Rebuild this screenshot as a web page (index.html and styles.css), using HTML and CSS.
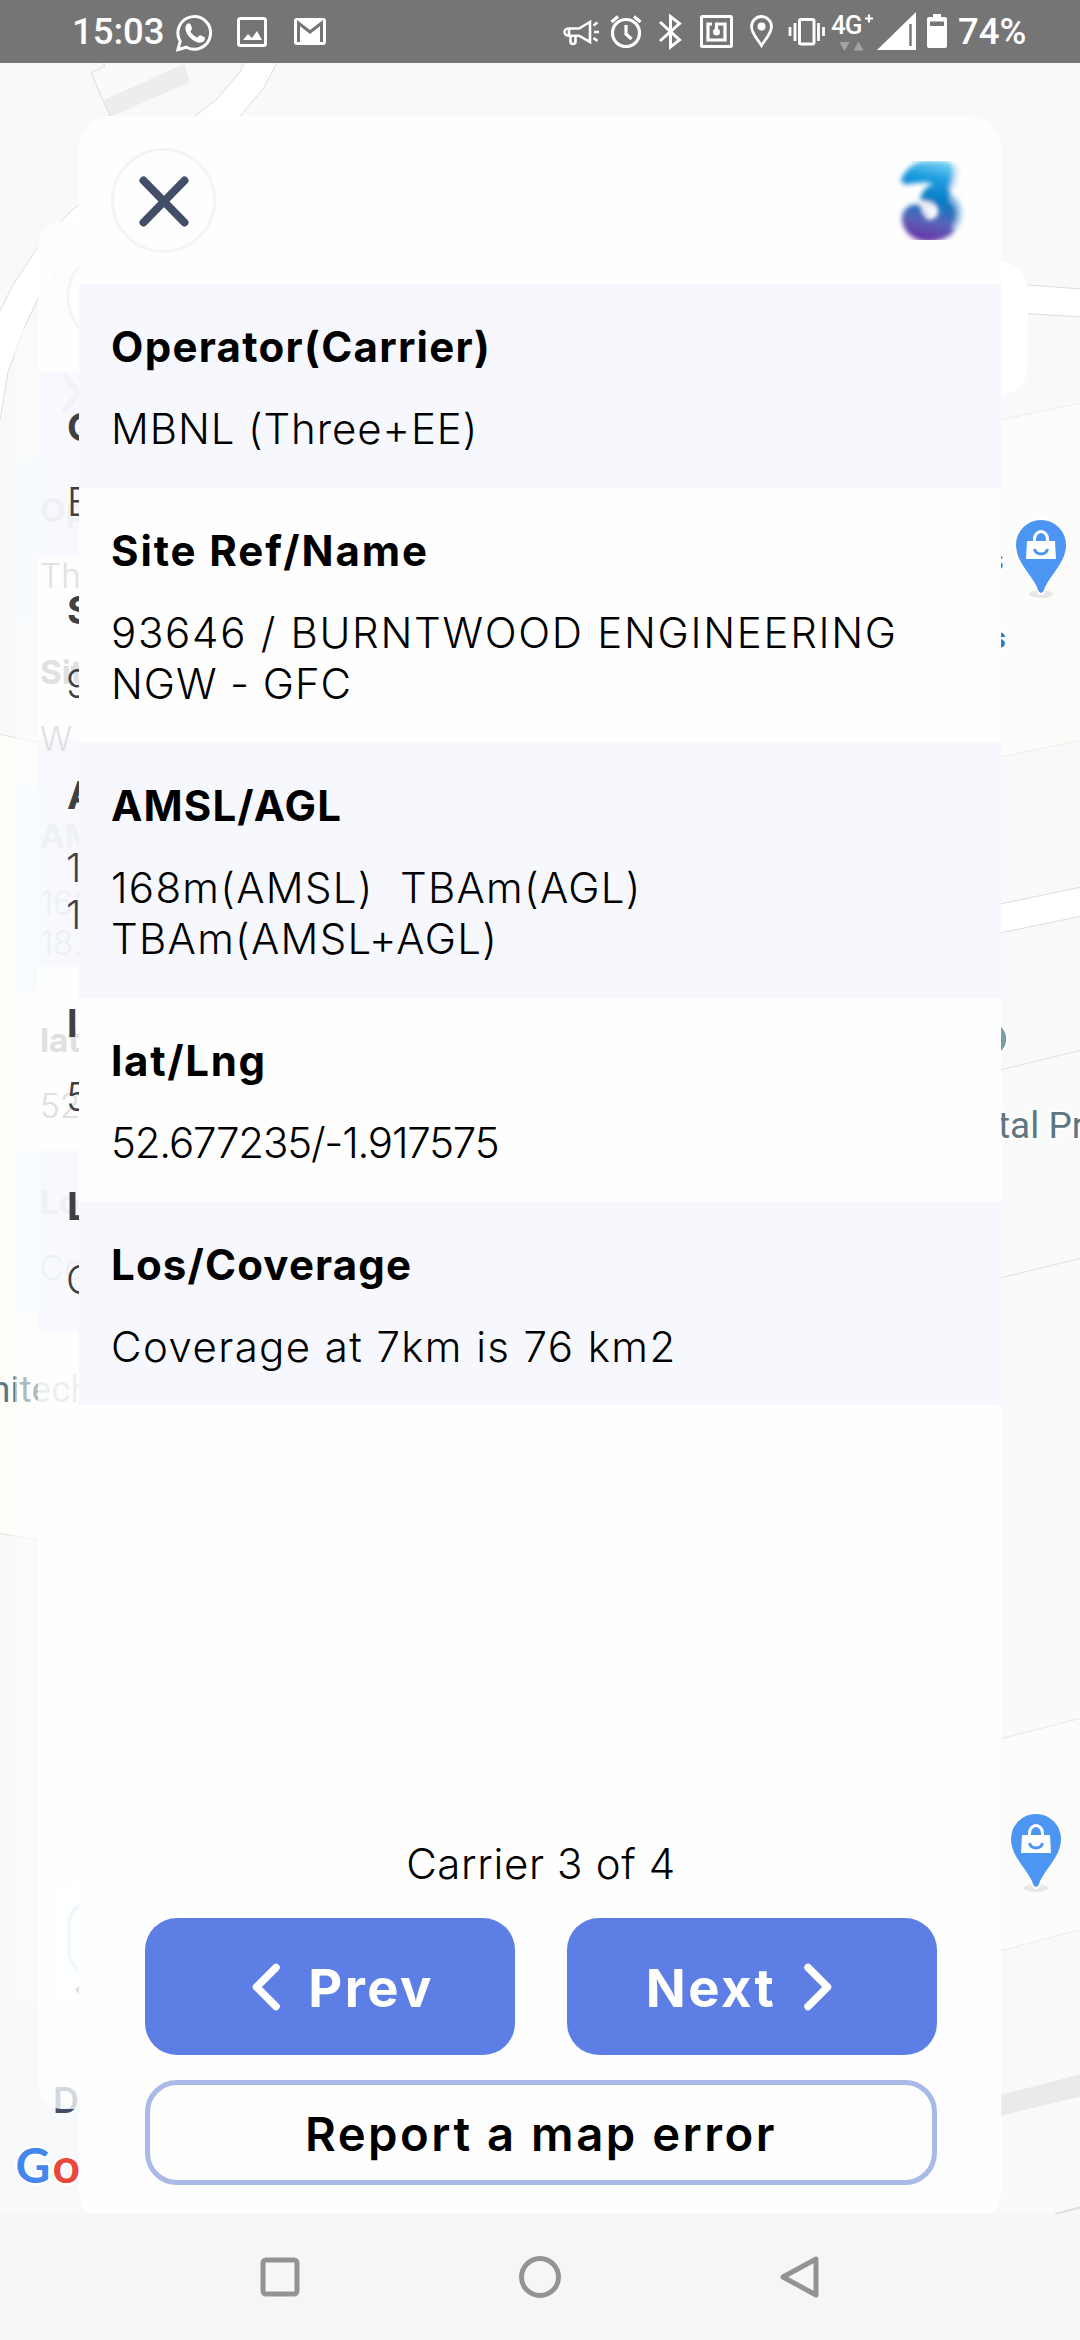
FILE: index.html
```html
<!DOCTYPE html>
<html lang="en">
<head>
<meta charset="utf-8">
<title>Carrier details</title>
<link rel="stylesheet" href="styles.css">
</head>
<body>
<div class="phone">
  <header class="status">
    <span class="clock">15:03</span>
    <svg class="status-left" width="152" height="63" viewBox="175 0 152 63" fill="none" stroke="#fff">
      <path d="M178 49.500l2.200-8.300a16.300 16.300 0 1 1 6.200 6z" stroke-width="3"/>
      <path d="M187 24c2-1.500 3.500-.5 4 1.500l1 2.500c.5 1.500-1.500 2.500-1.500 3.500 1.500 3 3.500 4.500 6.500 6 1.500-.5 2.500-3 4-2l3.500 1.800c1.500 1 0 4-2 4.800-5 2-10-1.500-13-5s-6-9-2.500-13.100z" fill="#fff" stroke="none"/>
      <rect x="238.500" y="18.500" width="27" height="27" rx="2" stroke-width="3"/>
      <path d="M243 40l5-6 4 4 5-7 5 9z" fill="#fff" stroke="none"/>
      <rect x="294" y="18" width="32" height="27" rx="3" fill="#fff" stroke="none"/>
      <path d="M298.500 42V23l11.500 9 11.500-9v19" stroke="#757575" stroke-width="3"/>
    </svg>
    <svg class="status-right" width="388" height="63" viewBox="562 0 388 63" fill="none" stroke="#fff">
      <g stroke-width="2.600"><path d="M590 22l-11 6.500h-10a4.500 3.600 0 0 0 0 7.200h10L590 42zM570.500 36v5.500a2 2 0 0 0 5 0V36M569 29v6M593.500 25.500l4-3M594 32h5M593.500 38l4 3"/></g>
      <circle cx="626" cy="33" r="13.500" stroke-width="3.200"/>
      <path d="M611.500 22l6.500-5.500M640.500 22l-6.500-5.500M626 25v9l5.500 5" stroke-width="3.200"/>
      <path d="M660 22l19.500 18-9 7V16.500l9 7L660 41" stroke-width="3"/>
      <rect x="701.500" y="16.500" width="30" height="30" rx="1" stroke-width="3"/>
      <path d="M712 24h-4v16h17V24h-8.500v7" stroke-width="3.200"/><circle cx="716.500" cy="32" r="3.500" fill="#fff" stroke="none"/>
      <path d="M761.500 45.500c-4-6.500-10-12-10-19a10 10 0 0 1 20 0c0 7-6 12.500-10 19z" stroke-width="2.800"/><circle cx="761.500" cy="26.500" r="4" fill="#fff" stroke="none"/>
      <rect x="799.500" y="19.500" width="14.500" height="24.500" rx="1.500" stroke-width="3"/>
      <path d="M795 23v18M790 27v9M818.500 23v18M823.500 27v9" stroke-width="2.800"/>
      <text class="net" x="831" y="34">4G</text>
      <path d="M865 18.500h8M869 14.500v8" stroke-width="2.200"/>
      <path d="M839.500 42h10l-5 9zM853.500 50.500h10l-5-9z" fill="#a3a3a3" stroke="none"/>
      <path d="M877 50L916 12v38z" fill="#fff" stroke="none"/><path d="M910.500 24v22" stroke="#757575" stroke-width="2.400"/>
      <path d="M929 17h4v-3h8v3h4a2 2 0 0 1 2 2v27a2 2 0 0 1-2 2h-16a2 2 0 0 1-2-2V19a2 2 0 0 1 2-2z" fill="#fff" stroke="none"/><path d="M930 21.500h14v4.500h-14z" fill="#757575" stroke="none"/>
    </svg>
    <span class="battery">74%</span>
  </header>

  <main class="stage">
    <svg class="map" width="1080" height="2151" viewBox="0 63 1080 2151">
      <path d="M0 63h1080v2151H0z" fill="#f7f9fb"/>
      <path d="M244 63l-4 9-23 27-22 17L79 205l-7 5-34 37-25 38L0 311v109l8-48 15-41 15-33 41-54L240 116l23-27 14-26z" fill="#fff"/>
      <path d="M244 63l-4 9-23 27-22 17M79 205l-7 5-34 37-25 38L0 311M0 420l8-48 15-41 15-33 41-54M240 116l23-27 14-26" fill="none" stroke="#dcdddf"/>
      <path d="M105 66l-2-3h81l-80 37-13-27z" fill="#f9fbfa"/>
      <path d="M184 64l6 18-80 35-6-17z" fill="#ededed"/>
      <path d="M110 116l-19-43 14-7-2-3" fill="none" stroke="#cfcfcf" stroke-dasharray="2 1"/>
      <path d="M1000 283l82 6v28l-82-5z" fill="#fff" stroke="#dcdddf"/>
      <path d="M1000 420l82-17v337l-82 17z" fill="#fcfdfa" stroke="#f0ede8"/>
      <path d="M1000 904l82-17v29l-82 17z" fill="#fff" stroke="#dcdddf"/>
      <path d="M1000 1070l82-20v668l-82 21z" fill="#f9fbfa" stroke="#dfe1e1"/>
      <path d="M1000 1278l82-20" stroke="#dfe1e1"/>
      <path d="M1000 1739l82-21v211l-82 22z" fill="#fcfdfa" stroke="#efece7"/>
      <path d="M1000 2116l82-21v119h-82z" fill="#f9fbfa"/>
      <path d="M1000 2095l82-21v22l-82 20z" fill="#eaeaea"/>
      <path d="M1055 2214l27-7" stroke="#ddd" stroke-width="2"/>
      <path d="M-2 734l100 21v796l-100-18z" fill="#fdfdfa" stroke="#e3e2df"/>
      <rect x="900" y="261" width="128" height="135" rx="30" fill="#fff"/>
      <g id="shop">
        <ellipse cx="1041" cy="594" rx="12" ry="4" fill="#e8e8e6"/>
        <path d="M1041 594c-2 0-3-1-4-4-4-13-22-26-22-45a26 26 0 0 1 52 0c0 19-18 32-22 45-1 3-2 4-4 4z" fill="#4c95f3" stroke="#fff" stroke-width="2"/>
        <path d="M1027 541h28l1 18h-30z" fill="#fff"/>
        <path d="M1034.500 542v-3a6.500 7.500 0 0 1 13 0v3" fill="none" stroke="#fff" stroke-width="3"/>
        <path d="M1034.500 549c1 6.500 12 6.500 13 0" fill="none" stroke="#4c95f3" stroke-width="3"/>
      </g>
      <use href="#shop" x="-5" y="1294"/>
      <text class="poi blue" x="988.500" y="570">s</text>
      <text class="poi blue bold" x="990.500" y="648">s</text>
      <circle cx="990" cy="1039" r="17.500" fill="#7b9cab" stroke="#fff" stroke-width="2.500"/>
      <text class="poi" x="998" y="1138">tal Pr</text>
      <text class="poi" x="-10" y="1402">nitech</text>
      <text class="google" x="15.500" y="2183"><tspan fill="#4485ee">G</tspan><tspan fill="#e8493c" x="52.500">o</tspan></text>
      <text class="ghost-label" x="53" y="2112.500">D</text>
      <rect x="15" y="326" width="100" height="1677" rx="16" fill="#fdfffe" fill-opacity=".5"/>
      <path d="M15 460h80v162H15zM15 786h80v204H15zM15 1151h80v163H15z" fill="#f6f9ff" fill-opacity=".5"/>
      <rect x="38" y="222" width="100" height="1887" rx="24" fill="#fefefe" fill-opacity=".78"/>
      <path d="M38 372h60v183H38zM38 738h60v229H38zM38 1151h60v180H38z" fill="#f6f8fe" fill-opacity=".85"/>
      <rect x="53" y="1880" width="80" height="177" rx="30" fill="#fff" fill-opacity=".6"/>
      <rect x="69" y="1901" width="80" height="74" rx="24" fill="none" stroke="#f4f6fd" stroke-width="4"/>
      <path d="M75 1990l6-6v12z" fill="#ddd"/>
      <circle cx="116" cy="297" r="48" fill="none" stroke="#f3f4f8" stroke-width="2.500"/>
      <path d="M65 376l28 36M65 410l28-36" stroke="#f1f3f8" stroke-width="6" stroke-linecap="round"/>
      <g font-size="33.300">
        <g class="ghost-bold" fill="#eff1f4"><text x="40" y="522">Op</text><text x="40" y="848">AM</text><text x="40" y="1214">Lo</text></g>
        <g class="ghost-bold" fill="#e0e0e0"><text x="40" y="684">Sit</text><text x="40" y="1052">lat</text></g>
        <g class="ghost-light" fill="#e0e0e0"><text x="40" y="588">Th</text><text x="40" y="751">W</text><text x="40" y="1118">52</text></g>
        <g class="ghost-light" fill="#eef0f4"><text x="40" y="915">168</text><text x="40" y="955">182</text><text x="40" y="1280">Co</text></g>
      </g>
      <g font-size="38.900" fill="#404043">
        <g class="ghost-bold"><text x="67" y="441">O</text><text x="67" y="624">S</text><text x="67" y="809">A</text><text x="67" y="1037">l</text><text x="67" y="1220">L</text></g>
        <g class="ghost-light"><text x="67" y="516">E</text><text x="66" y="698">9</text><text x="66" y="882">1</text><text x="66" y="929">1</text><text x="66" y="1111">5</text><text x="66" y="1294">C</text></g>
      </g>
    </svg>

    <section class="card">
      <div class="card-head">
        <button class="close" aria-label="Close">
          <svg width="52" height="54" viewBox="0 0 52 54"><path d="M5.500 6.500l41 42M46.500 6.500l-41 42" stroke="#434f68" stroke-width="8" stroke-linecap="round"/></svg>
        </button>
        <svg class="brand" width="72" height="79" viewBox="0 0 72 79">
          <defs>
            <linearGradient id="brandFill" x1="0.550" y1="0" x2="0.400" y2="1">
              <stop offset="0" stop-color="#6fcdf2"/><stop offset=".22" stop-color="#189ade"/><stop offset=".5" stop-color="#0c7ac2"/><stop offset=".75" stop-color="#5a62b8"/><stop offset="1" stop-color="#6a2fa3"/>
            </linearGradient>
            <filter id="soft" x="-10%" y="-10%" width="120%" height="120%"><feGaussianBlur stdDeviation="2.400"/></filter>
          </defs>
          <g filter="url(#soft)"><path d="M6 19C11 7 20 0 32 0h14c12 0 15 6 13 16-1 6-3 11-5 16 9 5 13 12 12 21-1 18-15 27-32 28C19 81 6 70 7 56c1-9 9-14 17-12 6 2 9 8 7 14 8 2 13-3 12-9-1-7-9-8-18-10 2-8 5-14 14-16-9-3-17-1-24 0-5 1-9-1-9-4z" fill="url(#brandFill)"/>
          <ellipse cx="33" cy="48" rx="6" ry="7" fill="#eef2fb"/><path d="M56 36c10 8 12 20 3 32M59 4c3 6 1 16-3 24" fill="none" stroke="#c9e2f6" stroke-width="6" opacity=".75"/></g>
        </svg>
      </div>

      <dl class="rows">
        <div class="row"><dt><span class="operator">Operator(Carrier)</span></dt><dd><span class="operator-value">MBNL (Three+EE)</span></dd></div>
        <div class="row"><dt><span class="site">Site Ref/Name</span></dt><dd><span class="site-value">93646 / BURNTWOOD ENGINEERING</span><br><span class="operator-value">NGW - GFC</span></dd></div>
        <div class="row"><dt><span class="height">AMSL/AGL</span></dt><dd><span class="height-value">168m(AMSL)  TBAm(AGL)</span><br><span class="height-value">TBAm(AMSL+AGL)</span></dd></div>
        <div class="row"><dt><span class="position">lat/Lng</span></dt><dd><span class="position-value">52.677235/-1.917575</span></dd></div>
        <div class="row"><dt><span class="height">Los/Coverage</span></dt><dd><span class="coverage-value">Coverage at 7km is 76 km2</span></dd></div>
      </dl>

      <footer class="actions">
        <p class="count">Carrier 3 of 4</p>
        <div class="pager">
          <button class="primary prev"><svg width="28" height="48" viewBox="0 0 28 48"><path d="M24 4.500L4.500 24 24 43.500"/></svg><span>Prev</span></button>
          <button class="primary next"><span>Next</span><svg width="28" height="48" viewBox="0 0 28 48"><path d="M4 4.500L23.500 24 4 43.500"/></svg></button>
        </div>
        <button class="report">Report a map error</button>
      </footer>
    </section>
  </main>

  <nav class="nav">
    <svg width="42" height="42" viewBox="0 0 42 42"><rect x="4" y="4" width="34" height="34" rx="3"/></svg>
    <svg width="42" height="42" viewBox="0 0 42 42"><circle cx="21" cy="21" r="18.500"/></svg>
    <svg width="42" height="42" viewBox="0 0 42 42"><path d="M37 3v36L4 21z"/></svg>
  </nav>
</div>
</body>
</html>
```
FILE: styles.css
```css
* { box-sizing: border-box; }
body { margin: 0; font-family: Inter, "Open Sans", sans-serif; color: #000; }
button { font: inherit; padding: 0; border: 0; background: none; }
svg { display: block; flex: none; }

.phone { display: flex; flex-direction: column; width: 1080px; height: 2340px; overflow: hidden; }

.status {
  display: flex; align-items: center; height: 63px; padding: 0 52px 0 72px;
  background: #757575; color: #fff; font: 500 36.5px/63px Roboto, sans-serif;
}
.clock { width: 93px; }
.status-left { margin-left: 10px; }
.status-right { margin-left: auto; margin-right: 8px; }
.battery { width: 70px; }
.net { font: 500 26px Roboto, sans-serif; fill: #fff; stroke: none; letter-spacing: -1px; }

.stage { position: relative; flex: 1; min-height: 0; overflow: hidden; padding: 53px 79px 0; }
.map { position: absolute; left: 0; top: 0; }
.poi { font: 37px Roboto, sans-serif; fill: #5d7680; stroke: #fff; stroke-width: 4px; paint-order: stroke; }
.poi.blue { font-size: 30px; fill: #3f78b8; }
.poi.bold { font-weight: 700; }
.google { font: 700 48px Lato, sans-serif; stroke: #fff; stroke-width: 5px; paint-order: stroke; }
.ghost-label { font-size: 36px; font-weight: 600; fill: #434f68; }
.ghost-bold { font-weight: 700; }
.ghost-light { font-weight: 300; }

.card {
  position: relative; display: flex; flex-direction: column; height: 2109px;
  background: #fefefe; border-radius: 32px;
}
.card-head { display: flex; justify-content: space-between; align-items: flex-start; height: 168px; padding: 32px 34px 0 32px; }
.close {
  display: grid; place-items: center; width: 105px; height: 105px;
  border: 3px solid #f4f4f5; border-radius: 50%;
}
.brand { margin-top: 13px; overflow: hidden; }

.rows { margin: 0; }
.row { padding: 37px 32px 33.4px; }
.row:nth-child(odd) { background: #f7f8fe; }
dt, dd { margin: 0; font-size: 42px; line-height: 51.2px; white-space: pre; }
dt { font-weight: 700; margin-bottom: 31px; }
dd { font-weight: 300; }
.operator { letter-spacing: 1.3px; }
.operator-value { letter-spacing: .9px; }
.site { letter-spacing: 1.9px; }
.site-value { letter-spacing: 1.7px; }
.height { letter-spacing: 1.15px; }
.height-value { letter-spacing: 1.3px; }
.position { letter-spacing: 1.7px; }
.position-value { letter-spacing: -1.2px; }
.coverage-value { letter-spacing: 1.4px; }

.actions { display: flex; flex-direction: column; margin: auto 64px 40px 66px; }
.count { margin: 0; text-align: center; font-size: 42px; font-weight: 300; line-height: 51px; letter-spacing: .65px; }
.pager { display: flex; gap: 52px; margin: 29px 0 25px; }
.primary {
  flex: 1; display: flex; align-items: center; justify-content: center; gap: 28px; letter-spacing: 2.4px;
  height: 137px; border-radius: 32px; background: #5d7ee4; color: #fff; font-size: 52.5px; font-weight: 700; line-height: 64px;
}
.prev { padding-left: 26px; }
.next { padding-right: 26px; }
.primary span { padding-top: 3px; }
.primary path { fill: none; stroke: #fff; stroke-width: 7.5px; stroke-linecap: round; stroke-linejoin: round; }
.report { height: 105px; padding-top: 2px; border: 5px solid #a9bae9; border-radius: 32px; font-size: 47.25px; font-weight: 600; line-height: 57px; letter-spacing: 2.5px; }

.nav { display: flex; align-items: center; justify-content: space-between; height: 126px; padding: 0 259px; background: #f6f6f6; }
.nav svg { fill: none; stroke: #939393; stroke-width: 5px; stroke-linejoin: round; }
```
